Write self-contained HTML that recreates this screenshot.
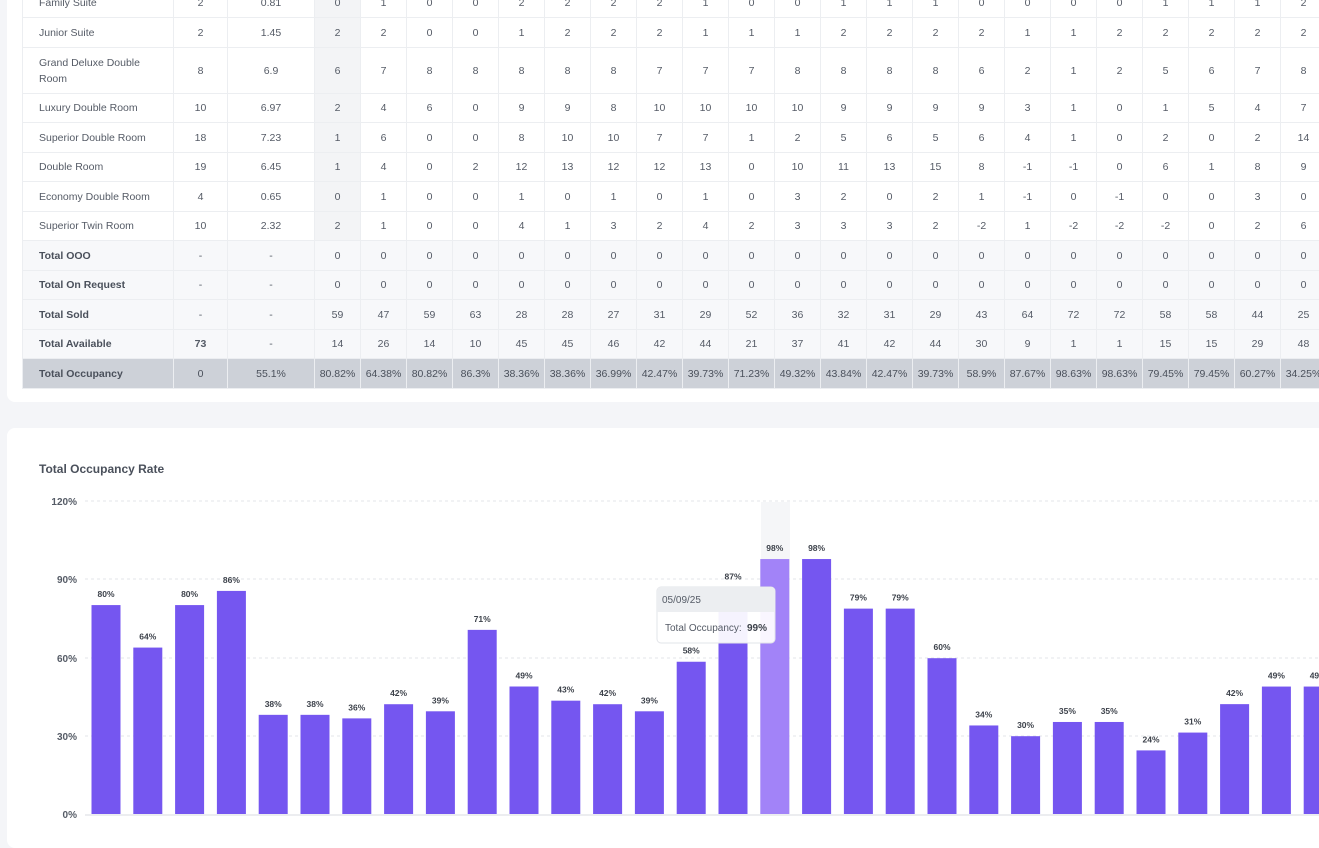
<!DOCTYPE html>
<html><head><meta charset="utf-8"><style>
*{margin:0;padding:0;box-sizing:border-box}
body{width:1319px;height:824px;overflow:hidden;background:#f4f5f8;font-family:"Liberation Sans",sans-serif;position:relative}
.card1{position:absolute;left:7px;top:-20px;width:1330px;height:422px;background:#fff;border-radius:8px;overflow:hidden}
table{position:absolute;left:15px;top:8px;border-collapse:collapse;table-layout:fixed;font-size:10.5px;color:#555b66}
td{border:1px solid #eceef1;text-align:center;padding:0;white-space:nowrap;line-height:16px}
td.n{text-align:left;padding-left:16px;color:#555b66}
td.h{background:#f3f4f6}
tr.t td{background:#f7f8fa}
tr.t td.n{font-weight:bold;color:#4a505b}
tr.o td{background:#cdd1d8;color:#4a505b}
tr.o td.n{font-weight:bold}
.card2{position:absolute;left:7px;top:428px;width:1330px;height:420px;background:#fff;border-radius:8px}
.title{position:absolute;left:39px;top:462px;font-size:12px;font-weight:bold;color:#4a505b}
svg{position:absolute;left:0;top:0}
</style></head><body>
<div class="card1">
<table id="t">
<colgroup><col style="width:151px"><col style="width:54px"><col style="width:87px"></colgroup>
</table>
</div>
<div class="card2"></div>
<div class="title">Total Occupancy Rate</div>
<svg id="c" width="1319" height="824"></svg>
<script>
const rows=[
["Family Suite","2","0.81","0,1,0,0,2,2,2,2,1,0,0,1,1,1,0,0,0,0,1,1,1,2",29],
["Junior Suite","2","1.45","2,2,0,0,1,2,2,2,1,1,1,2,2,2,2,1,1,2,2,2,2,2",30],
["Grand Deluxe Double<br>Room","8","6.9","6,7,8,8,8,8,8,7,7,7,8,8,8,8,6,2,1,2,5,6,7,8",46],
["Luxury Double Room","10","6.97","2,4,6,0,9,9,8,10,10,10,10,9,9,9,9,3,1,0,1,5,4,7",29],
["Superior Double Room","18","7.23","1,6,0,0,8,10,10,7,7,1,2,5,6,5,6,4,1,0,2,0,2,14",30],
["Double Room","19","6.45","1,4,0,2,12,13,12,12,13,0,10,11,13,15,8,-1,-1,0,6,1,8,9",29],
["Economy Double Room","4","0.65","0,1,0,0,1,0,1,0,1,0,3,2,0,2,1,-1,0,-1,0,0,3,0",30],
["Superior Twin Room","10","2.32","2,1,0,0,4,1,3,2,4,2,3,3,3,2,-2,1,-2,-2,-2,0,2,6",29],
["Total OOO","-","-","0,0,0,0,0,0,0,0,0,0,0,0,0,0,0,0,0,0,0,0,0,0",30,"t"],
["Total On Request","-","-","0,0,0,0,0,0,0,0,0,0,0,0,0,0,0,0,0,0,0,0,0,0",29,"t"],
["Total Sold","-","-","59,47,59,63,28,28,27,31,29,52,36,32,31,29,43,64,72,72,58,58,44,25",30,"t"],
["Total Available","<b>73</b>","-","14,26,14,10,45,45,46,42,44,21,37,41,42,44,30,9,1,1,15,15,29,48",29,"t"],
["Total Occupancy","0","55.1%","80.82%,64.38%,80.82%,86.3%,38.36%,38.36%,36.99%,42.47%,39.73%,71.23%,49.32%,43.84%,42.47%,39.73%,58.9%,87.67%,98.63%,98.63%,79.45%,79.45%,60.27%,34.25%",30,"o"]];
let cg=document.querySelector('colgroup');for(let i=0;i<22;i++)cg.innerHTML+='<col style="width:46px">';
let h='';rows.forEach(r=>{h+=`<tr class="${r[5]||''}" style="height:${r[4]}px"><td class="n">${r[0]}</td><td>${r[1]}</td><td>${r[2]}</td>`;r[3].split(',').forEach((v,i)=>{h+=`<td${i==0&&!r[5]?' class="h"':''}>${v}</td>`});h+='</tr>'});
document.getElementById('t').innerHTML+=h;
const vals=[80.82,64.38,80.82,86.3,38.36,38.36,36.99,42.47,39.73,71.23,49.32,43.84,42.47,39.73,58.9,87.67,98.63,98.63,79.45,79.45,60.27,34.25,30.1,35.6,35.6,24.6,31.5,42.5,49.3,49.3];
let s='<rect x="761" y="502" width="29" height="312" fill="#f5f6f8"/>';
[[501,'120%'],[579,'90%'],[658,'60%'],[736,'30%'],[814,'0%']].forEach(([y,t])=>{s+=`<text x="77" y="${y+4}" text-anchor="end" font-size="10" font-weight="bold" fill="#555b66">${t}</text>`;if(y<814)s+=`<line x1="85" y1="${y}" x2="1319" y2="${y}" stroke="#e3e5e9" stroke-dasharray="3,3"/>`});
s+='<line x1="85" y1="815" x2="1319" y2="815" stroke="#d8dbe0"/>';
vals.forEach((v,i)=>{const cx=106+i*41.8,y=814-v*2.585;s+=`<rect x="${cx-14.5}" y="${y}" width="29" height="${814-y}" fill="${i==16?'#a283f8':'#7556f0'}"/><text x="${cx}" y="${y-8}" text-anchor="middle" font-size="8.5" font-weight="bold" fill="#3d424b">${Math.floor(v)}%</text>`;});
s+='<g><rect x="657" y="587" width="118" height="56" rx="4" fill="#fff" fill-opacity="0.93" stroke="#e2e4e8"/><path d="M657 612V591a4 4 0 0 1 4-4h110a4 4 0 0 1 4 4v21z" fill="#eceef1"/><text x="662" y="603" font-size="10" fill="#555b66">05/09/25</text><text x="665" y="631" font-size="10" fill="#555b66">Total Occupancy:</text><text x="747" y="631" font-size="10" font-weight="bold" fill="#3d424b">99%</text></g>';
document.getElementById('c').innerHTML=s;
</script>
</body></html>
